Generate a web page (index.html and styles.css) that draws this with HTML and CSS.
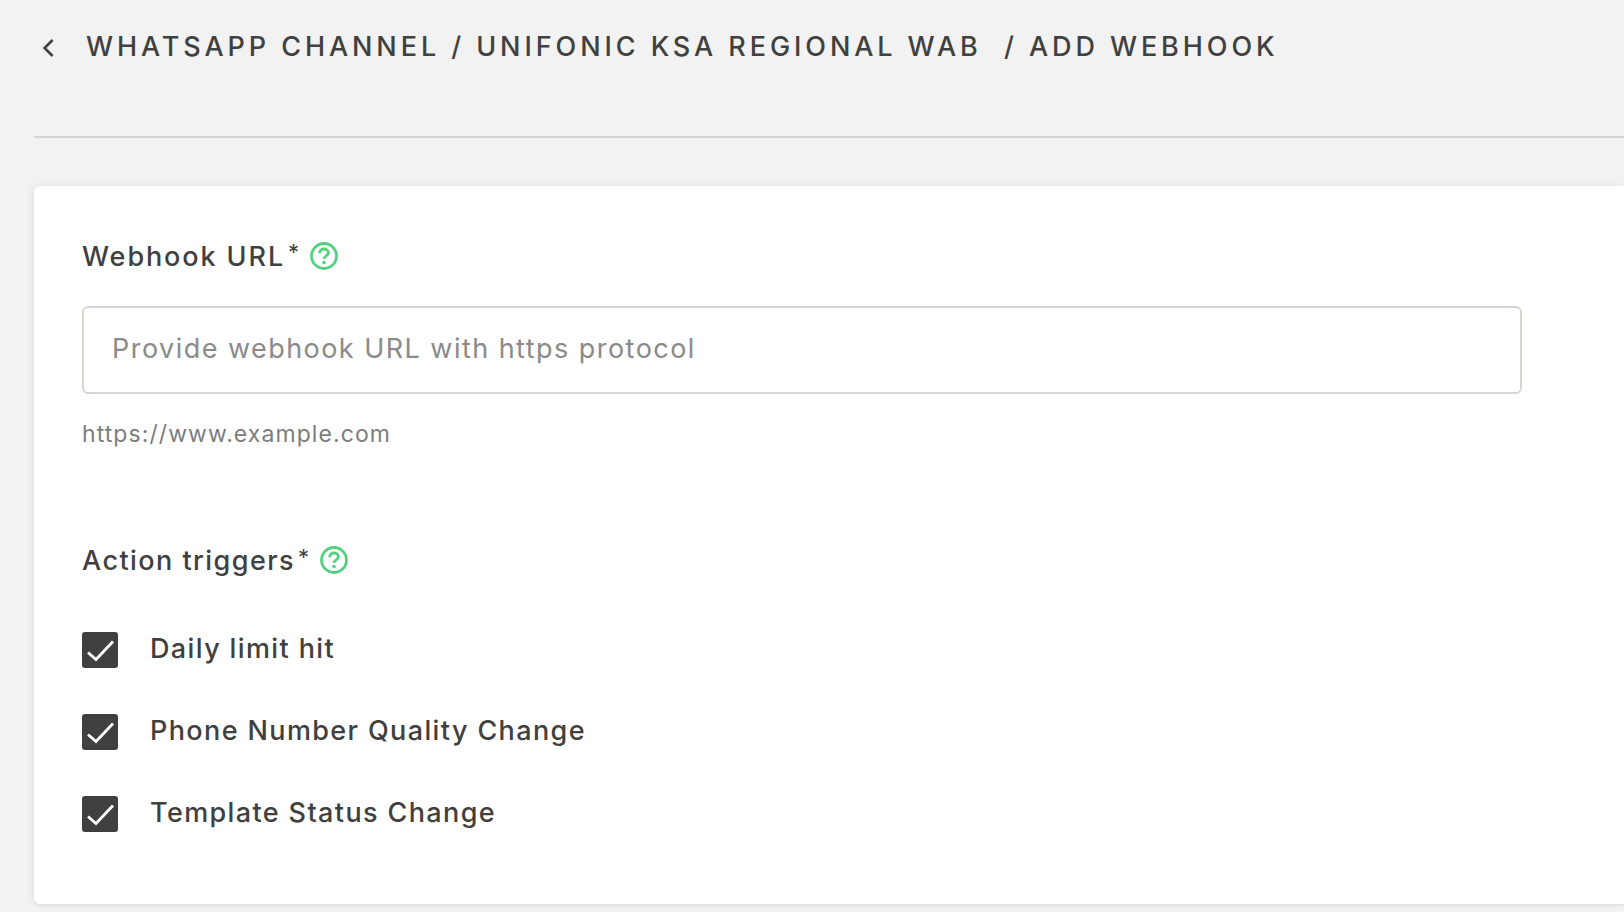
FILE: index.html
```html
<!DOCTYPE html>
<html lang="en">
<head>
<meta charset="utf-8">
<title>Add Webhook</title>
<link rel="stylesheet" href="styles.css">
</head>
<body>
<main class="page">
  <header class="header">
    <svg class="back" width="12" height="18" viewBox="0 0 12 18" aria-hidden="true"><path d="M10.6 1 2.6 9l8 8" fill="none" stroke="#404040" stroke-width="2.6"/></svg>
    <h1 class="title">WHATSAPP CHANNEL / UNIFONIC KSA REGIONAL WAB&nbsp; / ADD WEBHOOK</h1>
  </header>
  <section class="card">
    <div class="label-row">
      <span class="label label-wide">Webhook URL</span><span class="req">*</span>
      <svg class="help" width="28" height="28" viewBox="0 0 28 28" aria-hidden="true"><circle cx="14" cy="14" r="12.5" fill="none" stroke="#55d07f" stroke-width="2.8"/><path d="M9.6 11.2c0-2.7 2-4.2 4.4-4.2s4.4 1.5 4.4 3.8c0 3-4.2 3.1-4.4 6" fill="none" stroke="#55d07f" stroke-width="2.8"/><circle cx="14" cy="20.6" r="1.8" fill="#55d07f"/></svg>
    </div>
    <input class="field" type="text" placeholder="Provide webhook URL with https protocol">
    <p class="hint">https://www.example.com</p>
    <div class="label-row triggers">
      <span class="label">Action triggers</span><span class="req">*</span>
      <svg class="help" width="28" height="28" viewBox="0 0 28 28" aria-hidden="true"><circle cx="14" cy="14" r="12.5" fill="none" stroke="#55d07f" stroke-width="2.8"/><path d="M9.6 11.2c0-2.7 2-4.2 4.4-4.2s4.4 1.5 4.4 3.8c0 3-4.2 3.1-4.4 6" fill="none" stroke="#55d07f" stroke-width="2.8"/><circle cx="14" cy="20.6" r="1.8" fill="#55d07f"/></svg>
    </div>
    <ul class="checks">
      <li class="check"><span class="box"><svg width="36" height="36" viewBox="0 0 36 36" aria-hidden="true"><path d="M6 20.5 14 27.5 31 9.5" fill="none" stroke="#fff" stroke-width="2.8"/></svg></span>Daily limit hit</li>
      <li class="check"><span class="box"><svg width="36" height="36" viewBox="0 0 36 36" aria-hidden="true"><path d="M6 20.5 14 27.5 31 9.5" fill="none" stroke="#fff" stroke-width="2.8"/></svg></span>Phone Number Quality Change</li>
      <li class="check"><span class="box"><svg width="36" height="36" viewBox="0 0 36 36" aria-hidden="true"><path d="M6 20.5 14 27.5 31 9.5" fill="none" stroke="#fff" stroke-width="2.8"/></svg></span>Template Status Change</li>
    </ul>
  </section>
</main>
</body>
</html>
```
FILE: styles.css
```css
* { box-sizing: border-box; }
html, body { margin: 0; height: 100%; overflow: hidden; }
body {
  background: #f2f2f2;
  color: #404040;
  font-family: Inter, "Liberation Sans", sans-serif;
}
.page { padding-left: 34px; }
.header {
  height: 138px;
  border-bottom: 2px solid #d2d7d0;
  display: flex;
  align-items: flex-start;
  padding: 39px 0 0 8px;
}
.back { flex: none; }
.title {
  margin: -9px 0 0 32px;
  font-size: 27px;
  line-height: 34px;
  font-weight: 500;
  letter-spacing: 3.92px;
  white-space: nowrap;
}
.card {
  margin-top: 48px;
  height: 718px;
  background: #fff;
  border-radius: 6px 0 0 6px;
  box-shadow: 0 2px 0 #e4e4e4, -2px 0 6px rgba(0, 0, 0, .07);
  padding: 56px 0 0 48px;
}
.label-row { display: flex; align-items: center; height: 28px; }
.label { font-size: 27px; font-weight: 500; line-height: 28px; letter-spacing: 1.45px; }
.label-wide { letter-spacing: 1.9px; padding-top: 2px; }
.req { font-size: 22px; margin: -8px 0 0 3px; line-height: 20px; }
.help { margin-left: 11px; flex: none; }
.triggers .help { margin-top: -2px; }
.field {
  display: block;
  width: 1440px;
  height: 88px;
  margin-top: 36px;
  padding: 0 28px 4px;
  border: 2px solid #d2d7d0;
  border-radius: 6px;
  background: #fff;
  font: 400 27px Inter, "Liberation Sans", sans-serif;
  letter-spacing: 1.46px;
  color: #404040;
  outline: none;
}
.field::placeholder { color: #8a8a8a; opacity: 1; }
.hint {
  margin: 26px 0 0;
  font-size: 23px;
  line-height: 28px;
  letter-spacing: 1.08px;
  color: #7d7d7d;
}
.triggers { margin-top: 99px; }
.checks { list-style: none; margin: 56px 0 0; padding: 0; display: flex; flex-direction: column; gap: 46px; }
.check { display: flex; align-items: center; height: 36px; font-size: 27px; font-weight: 500; line-height: 36px; letter-spacing: 1.38px; }
.box {
  width: 36px;
  height: 36px;
  margin: 2px 32px 0 0;
  background: #404040;
  border-radius: 3px;
  flex: none;
  display: flex;
}
```
